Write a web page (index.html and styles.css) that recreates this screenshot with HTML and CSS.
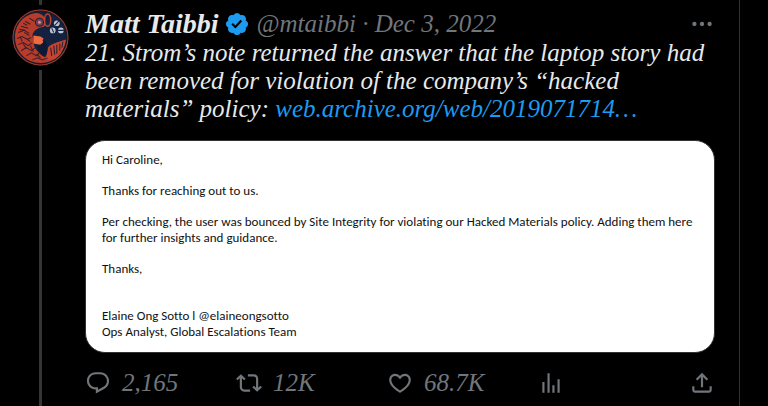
FILE: index.html
```
<!DOCTYPE html>
<html lang="en">
<head>
    <meta charset="UTF-8">
    <meta name="viewport" content="width=device-width, initial-scale=1.0">
    <title>Matt Taibbi</title>
    <link rel="stylesheet" href="styles.css">
</head>
<body>

    <main class="timeline">
        <article class="tweet">

            <!-- Avatar with the thread line above and below -->
            <div class="thread">
                <span class="line line-top"></span>
                <a class="avatar" href="#" aria-label="Matt Taibbi profile">
                    <svg viewBox="0 0 56 56" aria-hidden="true">
                        <circle cx="28" cy="28" r="27.5" fill="#1c1a2b"/>
                        <circle cx="28" cy="28" r="27" fill="none" stroke="#a03c2c" stroke-width="1"/>
                        <circle cx="28" cy="28" r="25" fill="#14213f"/>
                        <path d="M24 4C12 5 3 15 3 28c0 14 11 25 25 25 9 0 17-4 21-11-7 5-13 7-17 5-7-4-11-9-11-16l-1-5c1-4 4-7 9-8 4-1 5-3 4-7-1-4-5-7-9-7z" fill="#b73c2a"/>
                        <path d="M35 38c4-4 9-5 18-8-1 8-5 15-11 19-3 1-7 1-10 0 2-3 3-7 3-11z" fill="#c4452d"/>
                        <path d="M21 26l7 1 3 2-1 2 1 2-3 2-7-1z" fill="#ee6a3f"/>
                        <path d="M25 36c3 0 5-2 7-5 4 5 4 10 0 16-4-2-7-6-7-11z" fill="#0d1a36"/>
                        <ellipse cx="35" cy="11" rx="3" ry="6" fill="#14213f" stroke="#c4452d" stroke-width="1.5"/>
                        <circle cx="27" cy="13" r="4" fill="#6e3f54" stroke="#1b2340" stroke-width="1"/>
                        <circle cx="27" cy="13" r="1.5" fill="#d58c86"/>
                        <path d="M13 12l5 3M9 17l7 2M6 23l6-2 5 3M5 29l5-2 5 3 4-2M6 35l5-2 5 3 4-3M9 41l5-3 5 3 4-3M14 46l5-3 5 3 3-3M20 50l5-2 5 2 5-2M17 9l5 3M12 23l5 3M11 34l3 5M18 36l3 6M8 27l2 5M11 14l4 2M7 20l6 1M14 29l4 3M24 44l4 4" fill="none" stroke="#3a1d2b" stroke-width="1"/>
                        <path d="M38 38l1 8M41 36l1 9M44 35l0 9M47 34l0 7M50 32l-1 6" stroke="#2a1d33" stroke-width="1"/>
                        <circle cx="44" cy="14" r="2.8" fill="#b9c6d8"/>
                        <circle cx="40" cy="21" r="2.8" fill="#b9c6d8"/>
                        <circle cx="48" cy="21" r="2.8" fill="#b9c6d8"/>
                        <path d="M42 16l4-4M39 19l2 4M45 21h6" stroke="#14213f" stroke-width="1"/>
                    </svg>
                </a>
                <span class="line line-bottom"></span>
            </div>

            <div class="content">
                <header class="tweet-header">
                    <a class="name" href="#">Matt Taibbi</a>
                    <svg class="verified" viewBox="0 0 24 24" role="img" aria-label="Verified account"><path d="M22.25 12c0-1.43-.88-2.67-2.19-3.34.46-1.39.2-2.9-.81-3.91s-2.52-1.27-3.91-.81c-.66-1.31-1.91-2.19-3.34-2.19s-2.67.88-3.33 2.19c-1.4-.46-2.91-.2-3.92.81s-1.26 2.52-.8 3.91c-1.31.67-2.2 1.91-2.2 3.34s.89 2.67 2.2 3.34c-.46 1.39-.21 2.9.8 3.91s2.52 1.26 3.91.81c.67 1.31 1.91 2.19 3.34 2.19s2.68-.88 3.34-2.19c1.39.45 2.9.2 3.91-.81s1.27-2.52.81-3.91c1.31-.67 2.19-1.91 2.19-3.34zm-11.71 4.2L6.8 12.46l1.41-1.42 2.26 2.26 4.8-5.23 1.47 1.36-6.2 6.77z"/></svg>
                    <span class="meta"><a href="#">@mtaibbi</a> · <a href="#"><time datetime="2022-12-03">Dec 3, 2022</time></a></span>
                    <button class="more" type="button" aria-label="More">
                        <svg viewBox="0 0 24 24" aria-hidden="true"><circle cx="5" cy="12" r="2"/><circle cx="12" cy="12" r="2"/><circle cx="19" cy="12" r="2"/></svg>
                    </button>
                </header>

                <p class="text">21. Strom’s note returned the answer that the laptop story had been removed for violation of the company’s “hacked materials” policy: <a href="#">web.archive.org/web/2019071714…</a></p>

                <!-- Attached email -->
                <section class="letter">
                    <p>Hi Caroline,</p>
                    <p>Thanks for reaching out to us.</p>
                    <p>Per checking, the user was bounced by Site Integrity for violating our Hacked Materials policy. Adding them here for further insights and guidance.</p>
                    <p>Thanks,</p>
                    <p class="signature">Elaine Ong Sotto l @elaineongsotto<br>Ops Analyst, Global Escalations Team</p>
                </section>

                <div class="actions">
                    <button type="button" aria-label="2,165 replies">
                        <svg viewBox="0 0 24 24" aria-hidden="true"><path d="M1.751 10c0-4.42 3.584-8 8.005-8h4.366c4.49 0 8.129 3.64 8.129 8.13 0 2.96-1.607 5.68-4.196 7.11l-8.054 4.46v-3.69h-.067c-4.49.1-8.183-3.51-8.183-8.01zm8.005-6c-3.317 0-6.005 2.69-6.005 6 0 3.37 2.77 6.08 6.138 6.01l.351-.01h1.761v2.3l5.087-2.81c1.951-1.08 3.163-3.13 3.163-5.36 0-3.39-2.744-6.13-6.129-6.13H9.756z"/></svg>
                        <span>2,165</span>
                    </button>
                    <button type="button" aria-label="12K retweets">
                        <svg viewBox="0 0 24 24" aria-hidden="true"><path d="M4.5 3.88l4.432 4.14-1.364 1.46L5.5 7.55V16c0 1.1.896 2 2 2H13v2H7.5c-2.209 0-4-1.79-4-4V7.55L1.432 9.48.068 8.02 4.5 3.88zM16.5 6H11V4h5.5c2.209 0 4 1.79 4 4v8.45l2.068-1.93 1.364 1.46-4.432 4.14-4.432-4.14 1.364-1.46 2.068 1.93V8c0-1.1-.896-2-2-2z"/></svg>
                        <span>12K</span>
                    </button>
                    <button type="button" aria-label="68.7K likes">
                        <svg viewBox="0 0 24 24" aria-hidden="true"><path d="M16.697 5.5c-1.222-.06-2.679.51-3.89 2.16l-.805 1.09-.806-1.09C9.984 6.01 8.526 5.44 7.304 5.5c-1.243.07-2.349.78-2.91 1.91-.552 1.12-.633 2.78.479 4.82 1.074 1.97 3.257 4.27 7.129 6.61 3.87-2.34 6.052-4.64 7.126-6.61 1.111-2.04 1.03-3.7.477-4.82-.561-1.13-1.666-1.84-2.908-1.91zm4.187 7.69c-1.351 2.48-4.001 5.12-8.379 7.67l-.503.3-.504-.3c-4.379-2.55-7.029-5.19-8.382-7.67-1.36-2.5-1.41-4.86-.514-6.67.887-1.79 2.647-2.91 4.601-3.01 1.651-.09 3.368.56 4.798 2.01 1.429-1.45 3.146-2.1 4.796-2.01 1.954.1 3.714 1.22 4.601 3.01.896 1.81.846 4.17-.514 6.67z"/></svg>
                        <span>68.7K</span>
                    </button>
                    <button type="button" aria-label="Views">
                        <svg viewBox="0 0 24 24" aria-hidden="true"><path d="M8.75 21V3h2v18h-2zM18 21V8.5h2V21h-2zM4 21l.004-10h2L6 21H4zm9.248 0v-7h2v7h-2z"/></svg>
                    </button>
                    <button class="share" type="button" aria-label="Share">
                        <svg viewBox="0 0 24 24" aria-hidden="true"><path d="M12 2.59l5.7 5.7-1.41 1.42L13 6.41V16h-2V6.41l-3.3 3.3-1.41-1.42L12 2.59zM21 15l-.02 3.51c0 1.38-1.12 2.49-2.5 2.49H5.5C4.11 21 3 19.88 3 18.5V15h2v3.5c0 .28.22.5.5.5h12.98c.28 0 .5-.22.5-.5L19 15h2z"/></svg>
                    </button>
                </div>
            </div>

        </article>
    </main>

</body>
</html>
```
FILE: styles.css
```
* {
    box-sizing: border-box;
}
body {
    margin: 0;
    background-color: #000;
    color: #e7e9ea;
    font-family: Georgia, "Liberation Serif", serif;
    font-style: italic;
}
a {
    color: inherit;
    text-decoration: none;
}
button {
    padding: 0;
    border: none;
    background: none;
    color: inherit;
    font: inherit;
    cursor: pointer;
}
svg {
    display: block;
    fill: currentColor;
}
.timeline {
    min-height: 100vh;
    margin-right: 28px;
    border-right: 1px solid #2f3336;
    display: flex;
}
.tweet {
    flex: 1;
    display: flex;
    gap: 16px;
    padding: 0 24px 0 12px;
}

/* Thread column */
.thread {
    flex: none;
    width: 57px;
    display: flex;
    flex-direction: column;
    align-items: center;
}
.line {
    width: 3px;
    background-color: #333639;
}
.line-top {
    height: 5px;
    margin-bottom: 4px;
}
.line-bottom {
    flex: 1;
    margin-top: 4px;
}
.avatar svg {
    width: 57px;
    height: 57px;
}

/* Tweet body */
.content {
    flex: 1;
    min-width: 0;
    padding-top: 10px;
}
.tweet-header {
    display: flex;
    align-items: center;
    height: 28px;
    font-size: 25px;
    line-height: 28px;
    white-space: nowrap;
}
.name {
    font-size: 28px;
    font-weight: bold;
}
.verified {
    width: 26px;
    height: 26px;
    margin: 0 7px 0 5px;
    fill: #1d9bf0;
}
.meta,
.more,
.actions {
    color: #71767b;
}
.more {
    margin-left: auto;
}
.more svg {
    width: 26px;
    height: 26px;
}
.text {
    margin: 1px 0 17px;
    font-size: 25px;
    line-height: 28px;
}
.text a {
    color: #1d9bf0;
}

/* Email card */
.letter {
    padding: 11px 16px 12px;
    border: 1px solid #2f3336;
    border-radius: 20px;
    background-color: #fff;
    color: #111;
    font: normal 13px/16px Calibri, Lato, sans-serif;
    font-variant-ligatures: none;
}
.letter p {
    margin: 0 0 15px;
}
.letter .signature {
    margin: 31px 0 0;
}

/* Action bar */
.actions {
    display: flex;
    margin-top: 17px;
    font-size: 25px;
    line-height: 26px;
}
.actions button {
    flex: 1;
    display: flex;
    align-items: center;
    gap: 11px;
}
.actions .share {
    flex: none;
}
.actions svg {
    width: 26px;
    height: 26px;
}
```
